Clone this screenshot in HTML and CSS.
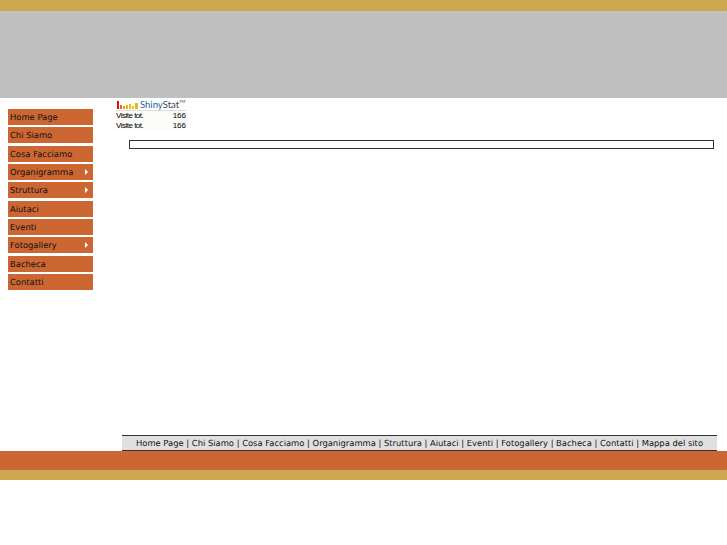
FILE: index.html
```html
<!DOCTYPE html>
<html lang="it">
<head>
    <meta charset="UTF-8">
    <title>Home Page</title>
    <link rel="stylesheet" href="styles.css">
</head>
<body>
    <div class="top-strip"></div>
    <div class="banner"></div>

    <div class="main">
        <ul class="menu">
            <li>Home Page</li>
            <li>Chi Siamo</li>
            <li>Cosa Facciamo</li>
            <li class="has-sub">Organigramma</li>
            <li class="has-sub">Struttura</li>
            <li>Aiutaci</li>
            <li>Eventi</li>
            <li class="has-sub">Fotogallery</li>
            <li>Bacheca</li>
            <li>Contatti</li>
        </ul>

        <div class="content">
            <div class="stats">
                <div class="stats-logo">
                    <svg class="stats-bars" width="22" height="8" viewBox="0 0 22 8">
                        <rect x="0" y="0" width="2" height="8" fill="#e01010"/>
                        <rect x="3" y="4" width="2" height="4" fill="#e86a10"/>
                        <rect x="6" y="5" width="2" height="3" fill="#ee9a10"/>
                        <rect x="9" y="4" width="2" height="4" fill="#f0b010"/>
                        <rect x="12" y="3" width="2" height="5" fill="#f0b810"/>
                        <rect x="15" y="5" width="2" height="3" fill="#f0c010"/>
                        <rect x="18" y="2" width="3" height="6" fill="#e8b810"/>
                    </svg>
                    <span class="shiny">Shiny</span><span class="stat">Stat</span><span class="tm">TM</span>
                </div>
                <div class="stats-row"><span class="stats-label">Visite tot.</span><span>166</span></div>
                <div class="stats-row"><span class="stats-label">Visite tot.</span><span>166</span></div>
            </div>
            <div class="empty-box"></div>
        </div>
    </div>

    <div class="footer-nav">Home Page | Chi Siamo | Cosa Facciamo | Organigramma | Struttura | Aiutaci | Eventi | Fotogallery | Bacheca | Contatti | Mappa del sito</div>
    <div class="bottom-orange"></div>
    <div class="bottom-gold"></div>
</body>
</html>
```

FILE: styles.css
```css
body {
    margin: 0;
    height: 545px;
    overflow: hidden;
    background-color: white;
    font-family: "DejaVu Sans", sans-serif;
    color: #111;
}
.top-strip {
    height: 11px;
    background-color: #cda850;
}
.banner {
    height: 87px;
    background-color: #c0c0c0;
}
.main {
    display: flex;
    height: 337px;
}
.menu {
    list-style: none;
    margin: 11px 0 0 8px;
    padding: 0;
    width: 85px;
    display: flex;
    flex-direction: column;
    gap: 2.35px;
}
.menu li {
    height: 16px;
    line-height: 17px;
    padding-left: 2px;
    font-size: 8.4px;
    text-rendering: geometricPrecision;
    background-color: #cc6633;
    box-sizing: border-box;
    position: relative;
}
.has-sub::after {
    content: "";
    position: absolute;
    right: 5px;
    top: 5px;
    border-left: 3px solid white;
    border-top: 3px solid transparent;
    border-bottom: 3px solid transparent;
}
.content {
    flex: 1;
    padding: 1px 13px 0 23px;
}
.stats {
    width: 70px;
    font-family: "Liberation Sans", sans-serif;
    font-size: 8px;
    color: black;
    background-color: #fbfbf9;
}
.stats-logo {
    display: flex;
    align-items: center;
    height: 11px;
    padding-left: 1px;
    border-bottom: 1px solid #ddd;
    background-color: white;
    white-space: nowrap;
    font-family: "Lato", sans-serif;
    font-size: 9.5px;
}
.stats-bars {
    margin-right: 1px;
}
.shiny {
    color: #1d5fa8;
}
.stat {
    color: #444;
}
.tm {
    font-size: 4px;
    align-self: flex-start;
    color: #333;
}
.stats-row {
    display: flex;
    justify-content: space-between;
    height: 9.5px;
    line-height: 9px;
}
.stats-label {
    letter-spacing: -0.5px;
}
.empty-box {
    height: 9px;
    margin: 10px 0 0 13px;
    border: 1px solid #333;
    box-sizing: border-box;
}
.footer-nav {
    height: 16px;
    margin: 0 10px 0 122px;
    line-height: 15px;
    text-align: center;
    font-size: 8.4px;
    text-rendering: geometricPrecision;
    white-space: nowrap;
    background-color: #e0e0e0;
    border-top: 1px solid #333;
    border-bottom: 1px solid #333;
    box-sizing: border-box;
}
.bottom-orange {
    height: 19px;
    background-color: #cc6633;
}
.bottom-gold {
    height: 10px;
    background-color: #cda850;
}
```
